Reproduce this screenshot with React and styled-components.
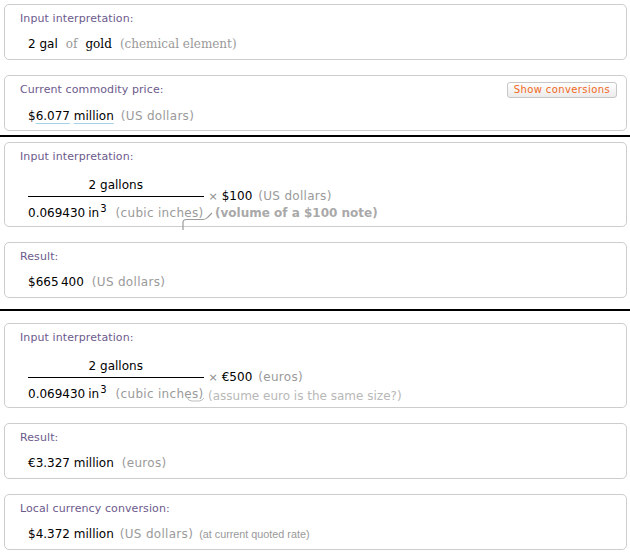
import React from "react";
import styled, { createGlobalStyle } from "styled-components";

const GlobalStyle = createGlobalStyle`
  body {
    margin: 0;
    background: #fff;
    font-family: "DejaVu Sans", Verdana, sans-serif;
  }
`;

const Page = styled.div`
  width: 630px;
  display: flex;
  flex-direction: column;
`;

const Section = styled.div`
  display: flex;
  flex-direction: column;
  gap: 15px;
  padding: ${p => p.$top}px 3px ${p => p.$bottom}px 4px;
`;

const Divider = styled.div`
  height: 2px;
  background: #000;
`;

const Pod = styled.div`
  position: relative;
  box-sizing: border-box;
  height: ${p => (p.$tall ? 85 : 56)}px;
  border: 1px solid #cdcdcd;
  border-radius: 5px;
  background: #fff;
  padding: 7px 9px 0 15px;
`;

const PodHeader = styled.div`
  display: flex;
  justify-content: space-between;
  align-items: center;
  height: 14px;
`;

const PodTitle = styled.div`
  font-size: 11px;
  line-height: 14px;
  letter-spacing: 0.1px;
  color: #6c5a8c;
`;

const ConvButton = styled.button`
  box-sizing: border-box;
  height: 16px;
  margin-top: -1px;
  padding: 0 6px;
  border: 1px solid #c6c6c6;
  border-radius: 3px;
  background: linear-gradient(#ffffff, #ebebeb);
  font-family: "DejaVu Sans", Verdana, sans-serif;
  font-size: 10px;
  letter-spacing: 0.4px;
  line-height: 13px;
  color: #f0691c;
`;

const Line = styled.div`
  display: flex;
  align-items: ${p => (p.$frac ? "flex-start" : "baseline")};
  gap: ${p => p.$gap || 0}px;
  margin-top: ${p => (p.$frac ? 12 : 9 + (p.$shift || 0))}px;
  padding-left: 8px;
  font-size: 12px;
  line-height: 18px;
  color: #000;
  white-space: nowrap;
`;

const Serif = styled.span`
  font-family: "DejaVu Serif", "Liberation Serif", serif;
  color: ${p => (p.$muted ? "#999" : "#000")};
`;

const Muted = styled.span`
  color: #9a9a9a;
  letter-spacing: 0.3px;
  margin-left: ${p => p.$ml || 0}px;
`;

const Tiny = styled.span`
  font-family: "Liberation Sans", Arial, sans-serif;
  font-size: 10.8px;
  color: #999;
`;

const Linked = styled.span`
  text-decoration: underline;
  text-decoration-color: #a4d2e6;
  text-underline-offset: 3px;
`;

const Fraction = styled.div`
  display: inline-flex;
  flex-direction: column;
`;

const Numer = styled.div`
  text-align: center;
  padding-bottom: 2px;
  border-bottom: 1px solid #000;
`;

const Denom = styled.div`
  padding-top: 7px;
`;

const Unit = styled.span`
  margin-left: 3px;
`;

const Sup = styled.sup`
  font-size: 10px;
  line-height: 0;
  vertical-align: 5px;
  margin-left: 1px;
`;

const Times = styled.div`
  display: flex;
  align-items: baseline;
  margin-top: 11px;
`;

const Cross = styled.span`
  font-size: 11px;
  color: #8a8a8a;
  margin: 0 4px 0 5px;
`;

const Note = styled.div`
  position: absolute;
  left: ${p => p.$left}px;
  top: ${p => p.$top}px;
  font-size: 12px;
  line-height: 14px;
  white-space: nowrap;
  font-weight: ${p => (p.$bold ? 700 : 400)};
  color: ${p => (p.$bold ? "#a9a9a9" : "#b8b8b8")};
`;

const Squiggle = styled.svg`
  position: absolute;
  left: 0;
  top: 0;
  overflow: visible;
  pointer-events: none;
`;

const Title = ({ children, action }) => (
  <PodHeader>
    <PodTitle>{children}</PodTitle>
    {action}
  </PodHeader>
);

const VolumePod = ({ price, unit, note, arrow }) => (
  <Pod $tall>
    <Title>Input interpretation:</Title>
    <Line $frac>
      <Fraction>
        <Numer>2 gallons</Numer>
        <Denom>
          0.069430<Unit>in</Unit>
          <Sup>3</Sup>
          <Muted $ml={9}>(cubic inches)</Muted>
        </Denom>
      </Fraction>
      <Times>
        <Cross>×</Cross>
        {price}
        <Muted $ml={6}>({unit})</Muted>
      </Times>
    </Line>
    {note}
    {arrow}
  </Pod>
);

export default function App() {
  return (
    <Page>
      <GlobalStyle />
      <Section $top={4} $bottom={4}>
        <Pod>
          <Title>Input interpretation:</Title>
          <Line $gap={8}>
            <span>2 gal</span>
            <Serif $muted>of</Serif>
            <Serif>gold</Serif>
            <Serif $muted>(chemical element)</Serif>
          </Line>
        </Pod>
        <Pod>
          <Title action={<ConvButton>Show conversions</ConvButton>}>
            Current commodity price:
          </Title>
          <Line $gap={7} $shift={1}>
            <span>
              $<Linked>6.077</Linked> <Linked>million</Linked>
            </span>
            <Muted>(US dollars)</Muted>
          </Line>
        </Pod>
      </Section>
      <Divider />
      <Section $top={5} $bottom={11}>
        <VolumePod
          price="$100"
          unit="US dollars"
          note={
            <Note $bold $left={210} $top={63}>
              (volume of a $100 note)
            </Note>
          }
          arrow={
            <Squiggle width="1" height="1">
              <path
                d="M178,87 L178,79.5 Q178,76.5 181.5,76.5 L198,76.5 Q201,76.5 203,74 L207,70"
                fill="none"
                stroke="#9a9a9a"
                strokeWidth="1.2"
              />
            </Squiggle>
          }
        />
        <Pod>
          <Title>Result:</Title>
          <Line $gap={8}>
            <span>$665{"\u2009"}400</span>
            <Muted>(US dollars)</Muted>
          </Line>
        </Pod>
      </Section>
      <Divider />
      <Section $top={12} $bottom={0}>
        <VolumePod
          price="€500"
          unit="euros"
          note={
            <Note $left={203} $top={65}>
              (assume euro is the same size?)
            </Note>
          }
          arrow={
            <Squiggle width="1" height="1">
              <path
                d="M182,73 Q183,77 187,77 L194,77 Q197,77 199,74"
                fill="none"
                stroke="#bdbdbd"
                strokeWidth="1"
              />
            </Squiggle>
          }
        />
        <Pod>
          <Title>Result:</Title>
          <Line $gap={8}>
            <span>€3.327 million</span>
            <Muted>(euros)</Muted>
          </Line>
        </Pod>
        <Pod>
          <Title>Local currency conversion:</Title>
          <Line $gap={6}>
            <span>$4.372 million</span>
            <Muted>(US dollars)</Muted>
            <Tiny>(at current quoted rate)</Tiny>
          </Line>
        </Pod>
      </Section>
    </Page>
  );
}
